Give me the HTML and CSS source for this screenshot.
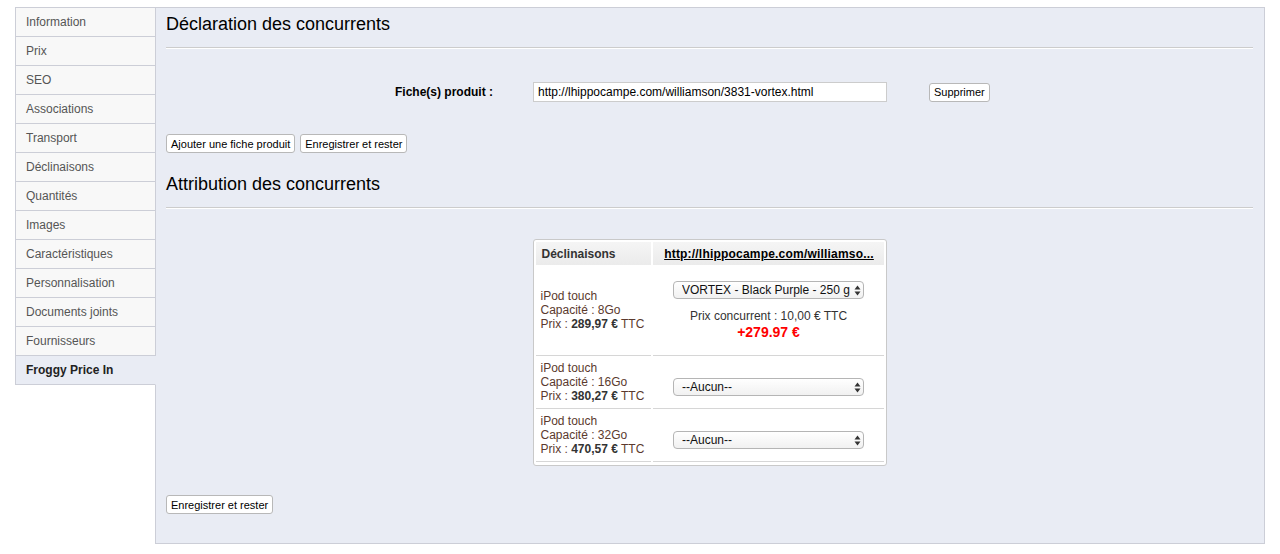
FILE: index.html
```html
<!DOCTYPE html>
<html lang="fr">
<head>
    <meta charset="UTF-8">
    <meta name="viewport" content="width=device-width, initial-scale=1.0">
    <link rel="stylesheet" href="styles.css">
    <title>Froggy Price In</title>
</head>
<body>
<div class="page">

    <!-- Onglets produit -->
    <ul class="tabs">
        <li class="tab">Information</li>
        <li class="tab">Prix</li>
        <li class="tab">SEO</li>
        <li class="tab">Associations</li>
        <li class="tab">Transport</li>
        <li class="tab">Déclinaisons</li>
        <li class="tab">Quantités</li>
        <li class="tab">Images</li>
        <li class="tab">Caractéristiques</li>
        <li class="tab">Personnalisation</li>
        <li class="tab">Documents joints</li>
        <li class="tab">Fournisseurs</li>
        <li class="tab tab-active">Froggy Price In</li>
    </ul>

    <div class="panel">
        <h4 class="section-title">Déclaration des concurrents</h4>
        <div class="separation"></div>

        <div class="fiche-row">
            <label for="fiche-1" class="fiche-label">Fiche(s) produit :</label>
            <input type="text" id="fiche-1" class="fiche-input" value="http://lhippocampe.com/williamson/3831-vortex.html">
            <button class="btn" type="button">Supprimer</button>
        </div>

        <div class="btn-row">
            <button class="btn" type="button">Ajouter une fiche produit</button>
            <button class="btn" type="submit">Enregistrer et rester</button>
        </div>

        <h4 class="section-title section-title-2">Attribution des concurrents</h4>
        <div class="separation"></div>

        <div class="grid-wrap">
            <div class="grid-box">
                <table class="grid">
                    <thead>
                        <tr>
                            <th class="col-decl">Déclinaisons</th>
                            <th class="col-url"><a href="#">http://lhippocampe.com/williamso...</a></th>
                        </tr>
                    </thead>
                    <tbody>
                        <tr>
                            <td class="decl">iPod touch<br>Capacité : 8Go<br>Prix : <b>289,97 €</b> TTC</td>
                            <td class="match">
                                <div class="match-inner">
                                    <div class="pick">
                                        <select class="pick-select">
                                            <option>VORTEX - Black Purple - 250 g</option>
                                        </select>
                                        <svg class="pick-arrows" width="7" height="11" viewBox="0 0 7 11"><path d="M3.5 0.5 L6.5 4.5 L0.5 4.5 Z M3.5 10.5 L6.5 6.5 L0.5 6.5 Z" fill="#333"/></svg>
                                    </div>
                                    <div class="concurrent">Prix concurrent : 10,00 € TTC</div>
                                    <div class="diff">+279.97 €</div>
                                </div>
                            </td>
                        </tr>
                        <tr>
                            <td class="decl">iPod touch<br>Capacité : 16Go<br>Prix : <b>380,27 €</b> TTC</td>
                            <td class="match">
                                <div class="pick pick-low">
                                    <select class="pick-select">
                                        <option>--Aucun--</option>
                                    </select>
                                    <svg class="pick-arrows" width="7" height="11" viewBox="0 0 7 11"><path d="M3.5 0.5 L6.5 4.5 L0.5 4.5 Z M3.5 10.5 L6.5 6.5 L0.5 6.5 Z" fill="#333"/></svg>
                                </div>
                            </td>
                        </tr>
                        <tr>
                            <td class="decl">iPod touch<br>Capacité : 32Go<br>Prix : <b>470,57 €</b> TTC</td>
                            <td class="match">
                                <div class="pick pick-low">
                                    <select class="pick-select">
                                        <option>--Aucun--</option>
                                    </select>
                                    <svg class="pick-arrows" width="7" height="11" viewBox="0 0 7 11"><path d="M3.5 0.5 L6.5 4.5 L0.5 4.5 Z M3.5 10.5 L6.5 6.5 L0.5 6.5 Z" fill="#333"/></svg>
                                </div>
                            </td>
                        </tr>
                    </tbody>
                </table>
            </div>
        </div>

        <div class="btn-row btn-row-bottom">
            <button class="btn" type="submit">Enregistrer et rester</button>
        </div>
    </div>

</div>
</body>
</html>
```

FILE: styles.css
```css
/* Global */
* {
    box-sizing: border-box;
}

body {
    margin: 0;
    background: #fff;
    font-family: "Liberation Sans", Arial, sans-serif;
    font-size: 12px;
    color: #333;
}

.page {
    display: flex;
    align-items: flex-start;
    padding: 7px 15px 0 15px;
}

/* Tabs */
.tabs {
    list-style: none;
    margin: 0 -1px 0 0;
    padding: 0;
    width: 141px;
    flex-shrink: 0;
    position: relative;
    z-index: 1;
}

.tab {
    height: 29px;
    line-height: 28px;
    padding-left: 10px;
    background: #f8f8f8;
    color: #555;
    border: 1px solid #ccced7;
    border-top: 0;
}

.tab:first-child {
    height: 30px;
    border-top: 1px solid #ccced7;
}

.tab-active {
    background: #e9ecf4;
    color: #222;
    font-weight: bold;
    border-right-color: #e9ecf4;
}

/* Panel */
.panel {
    flex: 1;
    background: #e9ecf4;
    border: 1px solid #ccced7;
    padding: 0 11px 29px 10px;
}

.section-title {
    margin: 5px 0 0 0;
    font-size: 18px;
    line-height: 22px;
    font-weight: normal;
    color: #000;
}

.section-title-2 {
    margin-top: 20px;
}

.separation {
    margin-top: 12px;
    border-top: 1px solid #ccc;
    border-bottom: 1px solid #fff;
}

/* Fiche produit */
.fiche-row {
    display: flex;
    align-items: center;
    margin-top: 33px;
    height: 20px;
}

.fiche-label {
    width: 327px;
    text-align: right;
    font-weight: bold;
    color: #000;
}

.fiche-input {
    margin-left: 40px;
    width: 354px;
    height: 20px;
    border: 1px solid #ccc;
    background: #fff;
    padding: 0 4px;
    font-family: inherit;
    font-size: 12px;
    color: #000;
    outline: 0;
}

.fiche-row .btn {
    margin-left: 42px;
}

/* Button */
.btn {
    height: 19px;
    padding: 0 4px;
    border: 1px solid #b8b8b8;
    border-radius: 3px;
    background: #fff;
    font-family: inherit;
    font-size: 11px;
    color: #000;
    cursor: pointer;
}

.btn-row {
    display: flex;
    gap: 5px;
    margin-top: 32px;
}

.btn-row-bottom {
    margin-top: 29px;
}

/* Attribution */
.grid-wrap {
    display: flex;
    justify-content: center;
    margin-top: 30px;
}

.grid-box {
    background: #fff;
    border: 1px solid #c9c9c9;
    border-radius: 3px;
    padding: 2px 0 3px 0;
}

.grid {
    border-collapse: separate;
    border-spacing: 2px 0;
}

.grid th {
    height: 23px;
    padding: 0 4px 0 6px;
    background: linear-gradient(#f5f5f5, #ebebeb);
    font-size: 12px;
    text-align: left;
}

.col-decl {
    width: 115px;
    color: #333;
}

.col-url {
    width: 231px;
    text-align: center !important;
}

.col-url a {
    color: #000;
    letter-spacing: 0.2px;
}

.grid td {
    border-bottom: 1px solid #d6d6d6;
    padding: 5px 4px 5px 5px;
    line-height: 14px;
    vertical-align: middle;
}

.decl {
    color: #5b3a2e;
}

.decl b {
    color: #333;
}

.match {
    text-align: center;
}

.match-inner {
    padding: 11px 0 9px 0;
}

.concurrent {
    margin-top: 10px;
    color: #333;
}

.diff {
    color: #f00;
    font-weight: bold;
    font-size: 14px;
    line-height: 18px;
}

/* Select */
.pick {
    position: relative;
    display: inline-block;
    width: 191px;
    vertical-align: middle;
}

.pick-low {
    margin-top: 10px;
}

.pick-select {
    appearance: none;
    -webkit-appearance: none;
    display: block;
    width: 100%;
    height: 18px;
    padding: 0 9px 0 8px;
    border: 1px solid #b5b5b5;
    border-radius: 4px;
    background: linear-gradient(#fff, #f1f1f1);
    font-family: inherit;
    font-size: 12px;
    color: #111;
    text-align: left;
}

.pick-arrows {
    position: absolute;
    right: 3px;
    top: 4px;
    pointer-events: none;
}
```
